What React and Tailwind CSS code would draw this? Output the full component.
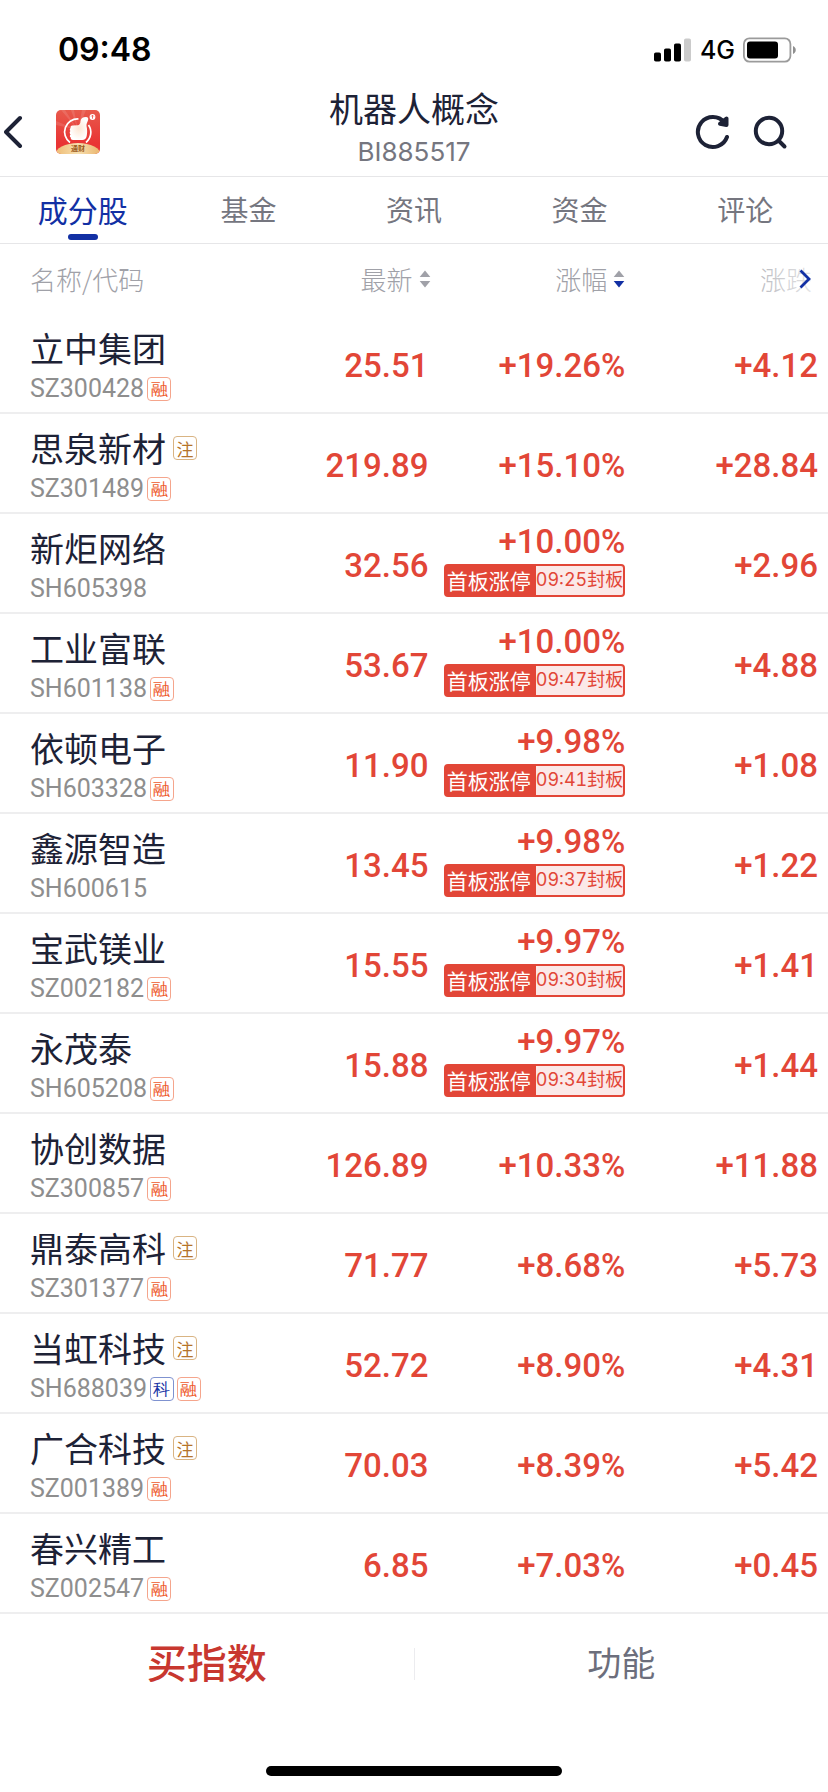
import { useState } from 'react';

const tabs = ['成分股', '基金', '资讯', '资金', '评论'];

const stocks = [
    { name: '立中集团', code: 'SZ300428', tags: ['融'], price: '25.51', pct: '+19.26%', diff: '+4.12' },
    { name: '思泉新材', code: 'SZ301489', isNew: true, tags: ['融'], price: '219.89', pct: '+15.10%', diff: '+28.84' },
    { name: '新炬网络', code: 'SH605398', tags: [], price: '32.56', pct: '+10.00%', limit: '09:25', diff: '+2.96' },
    { name: '工业富联', code: 'SH601138', tags: ['融'], price: '53.67', pct: '+10.00%', limit: '09:47', diff: '+4.88' },
    { name: '依顿电子', code: 'SH603328', tags: ['融'], price: '11.90', pct: '+9.98%', limit: '09:41', diff: '+1.08' },
    { name: '鑫源智造', code: 'SH600615', tags: [], price: '13.45', pct: '+9.98%', limit: '09:37', diff: '+1.22' },
    { name: '宝武镁业', code: 'SZ002182', tags: ['融'], price: '15.55', pct: '+9.97%', limit: '09:30', diff: '+1.41' },
    { name: '永茂泰', code: 'SH605208', tags: ['融'], price: '15.88', pct: '+9.97%', limit: '09:34', diff: '+1.44' },
    { name: '协创数据', code: 'SZ300857', tags: ['融'], price: '126.89', pct: '+10.33%', diff: '+11.88' },
    { name: '鼎泰高科', code: 'SZ301377', isNew: true, tags: ['融'], price: '71.77', pct: '+8.68%', diff: '+5.73' },
    { name: '当虹科技', code: 'SH688039', isNew: true, tags: ['科', '融'], price: '52.72', pct: '+8.90%', diff: '+4.31' },
    { name: '广合科技', code: 'SZ001389', isNew: true, tags: ['融'], price: '70.03', pct: '+8.39%', diff: '+5.42' },
    { name: '春兴精工', code: 'SZ002547', tags: ['融'], price: '6.85', pct: '+7.03%', diff: '+0.45' },
];

const tagColors = {
    注: 'border-[#d9b483] text-[#b5732a]',
    融: 'border-[#f5a58c] text-[#ee5a2c]',
    科: 'border-[#7f92d0] text-[#1733a5]',
};

function Tag({ children }) {
    return (
        <span className={`inline-flex size-6 items-center justify-center rounded border text-[17px] leading-none ${tagColors[children]}`}>
            {children}
        </span>
    );
}

function SortIcon({ active }) {
    return (
        <svg width="12" height="18" viewBox="0 0 12 18">
            <path d="M6 0.5 11.3 7H0.7Z" fill="#a0a1a8" />
            <path d="M6 17.5 0.7 11h10.6Z" fill={active ? '#1230a4' : '#a0a1a8'} />
        </svg>
    );
}

function Logo() {
    return (
        <svg width="44" height="44" viewBox="0 0 44 44" role="img" aria-label="通财">
            <defs>
                <linearGradient id="logoRed" x1="0" y1="0" x2="0" y2="1">
                    <stop offset="0" stopColor="#e85a4c" />
                    <stop offset="0.75" stopColor="#e93434" />
                </linearGradient>
                <linearGradient id="logoGold" x1="0" y1="0" x2="1" y2="0">
                    <stop offset="0" stopColor="#eebb74" />
                    <stop offset="0.5" stopColor="#f7dfae" />
                    <stop offset="1" stopColor="#e9b46c" />
                </linearGradient>
                <radialGradient id="logoHand">
                    <stop offset="0" stopColor="#fde6d4" />
                    <stop offset="1" stopColor="#fff" />
                </radialGradient>
                <clipPath id="logoClip"><rect width="44" height="44" rx="5" /></clipPath>
            </defs>
            <g clipPath="url(#logoClip)">
                <rect width="44" height="44" fill="url(#logoRed)" />
                <path d="M22 20 5 0h4ZM22 20 15 0h3ZM22 20 26 0h4ZM22 20 0 11v4Z" fill="#fff" opacity="0.12" />
                <path d="M22.500 9A13 13 0 0 0 14 32.500M32.500 15A13 13 0 0 1 30 32.500" fill="none" stroke="#fff" strokeWidth="1.700" />
                <path d="M16.500 15.500 22 15.200c2-.5 2.300-2 2.500-4 .2-2.600 2.200-4.200 5.500-4.200 1.800 0 2.500 1 2.200 2.600-.5 2.400-2 4-1.700 6.400.8 3 .9 7 .2 10-.5 2.500-2 3.900-4.500 4H17c-1.700 0-2.500-1-2.200-2.400-1.200-.8-1.200-2.300-.3-3.200-1-1-1-2.600-.1-3.300-1-1.200-.6-2.700.3-3.200-.5-1.300.3-2.400 1.800-2.400Z" fill="url(#logoHand)" />
                <circle cx="36.500" cy="7" r="2.900" fill="#fff" />
                <path d="M36.500 5.300v3.400M35.300 6.400l1.200-1.200 1.200 1.200" stroke="#e8473f" strokeWidth="0.800" fill="none" />
                <ellipse cx="22" cy="45" rx="23" ry="12" fill="url(#logoGold)" />
                <text x="22" y="41" textAnchor="middle" fontSize="7" fontWeight="700" fill="#9a5a20">通财</text>
            </g>
        </svg>
    );
}

function StatusBar() {
    return (
        <div className="flex h-[88px] items-center justify-between pt-3 pr-[31px] pl-[58px] font-['Inter',sans-serif] text-black">
            <span className="text-[32px] leading-10 font-semibold">09:48</span>
            <div className="flex items-center gap-2">
                <svg width="38" height="24" viewBox="0 0 38 24">
                    <rect x="0" y="14.500" width="7" height="9" rx="1.800" />
                    <rect x="10" y="10.500" width="7" height="13" rx="1.800" />
                    <rect x="20" y="5.500" width="7" height="18" rx="1.800" />
                    <rect x="30" y="0.500" width="7" height="23" rx="1.800" fill="#cbcbcb" />
                </svg>
                <span className="text-[25px] leading-8 font-medium">4G</span>
                <svg width="54" height="26" viewBox="0 0 54 26">
                    <rect x="0.900" y="1.400" width="46.500" height="23.200" rx="5.500" fill="none" stroke="#9b9b9b" strokeWidth="1.800" />
                    <rect x="4" y="4.500" width="31" height="17" rx="3" />
                    <path d="M50 9c3.700 1.500 3.700 6.500 0 8Z" fill="#8f8f8f" />
                </svg>
            </div>
        </div>
    );
}

function Header() {
    return (
        <header className="grid h-[89px] grid-cols-[1fr_auto_1fr] items-center border-b border-[#e6e6e8] text-[#1d2236]">
            <div className="flex items-center gap-8 pl-1">
                <button type="button" aria-label="返回">
                    <svg width="20" height="34" viewBox="0 0 20 34" fill="none" stroke="currentColor" strokeWidth="4" strokeLinecap="round" strokeLinejoin="round">
                        <path d="M16 3 2 17l14 14" />
                    </svg>
                </button>
                <Logo />
            </div>
            <div className="text-center">
                <h1 className="text-[34px] leading-10">机器人概念</h1>
                <p className="font-['Inter',sans-serif] text-[26px] leading-[48px] text-[#75767f]">BI885517</p>
            </div>
            <div className="flex items-center justify-end gap-[21px] pr-10">
                <button type="button" aria-label="刷新">
                    <svg width="36" height="36" viewBox="0 0 36 36" fill="none" stroke="currentColor" strokeWidth="4" strokeLinecap="round" strokeLinejoin="round">
                        <path d="M32 23A15 15 0 1 1 29.500 8.500" />
                        <path d="M31.500 4.500v6.500l-6.500-1.200Z" fill="currentColor" />
                    </svg>
                </button>
                <button type="button" aria-label="搜索">
                    <svg width="36" height="36" viewBox="0 0 36 36" fill="none" stroke="currentColor" strokeWidth="4" strokeLinecap="round">
                        <circle cx="17" cy="17" r="13.200" />
                        <path d="M27 27l5.500 5.500" />
                    </svg>
                </button>
            </div>
        </header>
    );
}

function LimitBadge({ time }) {
    return (
        <div className="flex h-[33px] items-stretch overflow-hidden rounded border-2 border-[#e24637] bg-[#e24637] font-['Noto_Sans_CJK_SC',sans-serif] font-normal whitespace-nowrap">
            <span className="flex items-center pr-[5px] pl-px text-[21px] leading-none text-white">首板涨停</span>
            <span className="flex items-center bg-[#fbe9e8] font-['Inter','Noto_Sans_CJK_SC',sans-serif] text-[18px] leading-none text-[#e24637] tabular-nums">{time}封板</span>
        </div>
    );
}

export default function App() {
    const [tab, setTab] = useState(0);

    return (
        <div className="flex min-h-screen flex-col bg-white font-['Noto_Sans_CJK_SC',sans-serif]">
            <StatusBar />
            <Header />
            <nav className="grid h-[67px] grid-cols-5 border-b border-[#e6e6e8]">
                {tabs.map((t, i) => (
                    <button key={t} type="button" onClick={() => setTab(i)}
                        className={`relative pb-0.5 ${i === tab ? 'text-[30px] text-[#1230a4]' : 'text-[28px] text-[#75767f]'}`}>
                        {t}
                        {i === tab && <span className="absolute bottom-[3px] left-1/2 h-1.5 w-[30px] -translate-x-1/2 rounded-full bg-[#1230a4]" />}
                    </button>
                ))}
            </nav>

            <table className="w-full table-fixed border-separate border-spacing-0">
                <thead className="text-[26px] leading-9 text-[#a0a1a8]">
                    <tr className="h-[70px]">
                        <th className="w-[28%] pl-[30px] text-left font-light">名称/代码</th>
                        <th className="w-[24%] font-light">
                            <button type="button" className="ml-auto flex items-center gap-1.5">最新<SortIcon /></button>
                        </th>
                        <th className="w-[24%] pr-1 font-light">
                            <button type="button" className="ml-auto flex items-center gap-1.5">涨幅<SortIcon active /></button>
                        </th>
                        <th className="relative w-[24%] pr-4 text-right font-light">
                            涨跌
                            <button type="button" aria-label="更多" className="absolute inset-y-0 right-0 flex w-20 items-center justify-end bg-linear-to-r from-white/20 to-white/85 pr-4">
                                <svg width="14" height="20" viewBox="0 0 14 20" fill="none" stroke="#1230a4" strokeWidth="2.800">
                                    <path d="M2.500 1.500 11 10l-8.500 8.500" />
                                </svg>
                            </button>
                        </th>
                    </tr>
                </thead>
                <tbody className="text-[#e24637]">
                    {stocks.map(s => (
                        <tr key={s.code} className="h-[100px] font-['Roboto',sans-serif] text-[33px] leading-10 font-medium *:border-b-2 *:border-[#eeeeef]">
                            <td className="pt-2 pl-[30px] whitespace-nowrap">
                                <div className="flex items-center gap-[7px] font-['Noto_Sans_CJK_SC',sans-serif] text-[34px] leading-[44px] font-normal text-[#1d2236]">
                                    {s.name}
                                    {s.isNew && <Tag>注</Tag>}
                                </div>
                                <div className="flex items-center gap-[3px] text-[25px] leading-[38px] font-normal text-[#8e8e8e]">
                                    {s.code}
                                    {s.tags.map(t => <Tag key={t}>{t}</Tag>)}
                                </div>
                            </td>
                            <td className="pt-1.5 pr-0.5 text-right">{s.price}</td>
                            <td className={`pr-1 ${s.limit ? 'pb-2' : 'pt-1.5'}`}>
                                <div className="flex flex-col items-end gap-0.5">
                                    <span>{s.pct}</span>
                                    {s.limit && <LimitBadge time={s.limit} />}
                                </div>
                            </td>
                            <td className="pt-1.5 pr-2.5 text-right">{s.diff}</td>
                        </tr>
                    ))}
                </tbody>
            </table>

            <footer className="mt-auto">
                <div className="grid h-[100px] grid-cols-[1fr_1px_1fr] items-center">
                    <button type="button" className="pb-1.5 text-[40px] font-medium text-[#c8372f]">买指数</button>
                    <span className="h-8 bg-[#ececef]" />
                    <button type="button" className="pb-1.5 text-[34px] text-[#6c6e7c]">功能</button>
                </div>
                <div className="mx-auto mt-[52px] mb-4 h-2.5 w-[296px] rounded-full bg-black" />
            </footer>
        </div>
    );
}
